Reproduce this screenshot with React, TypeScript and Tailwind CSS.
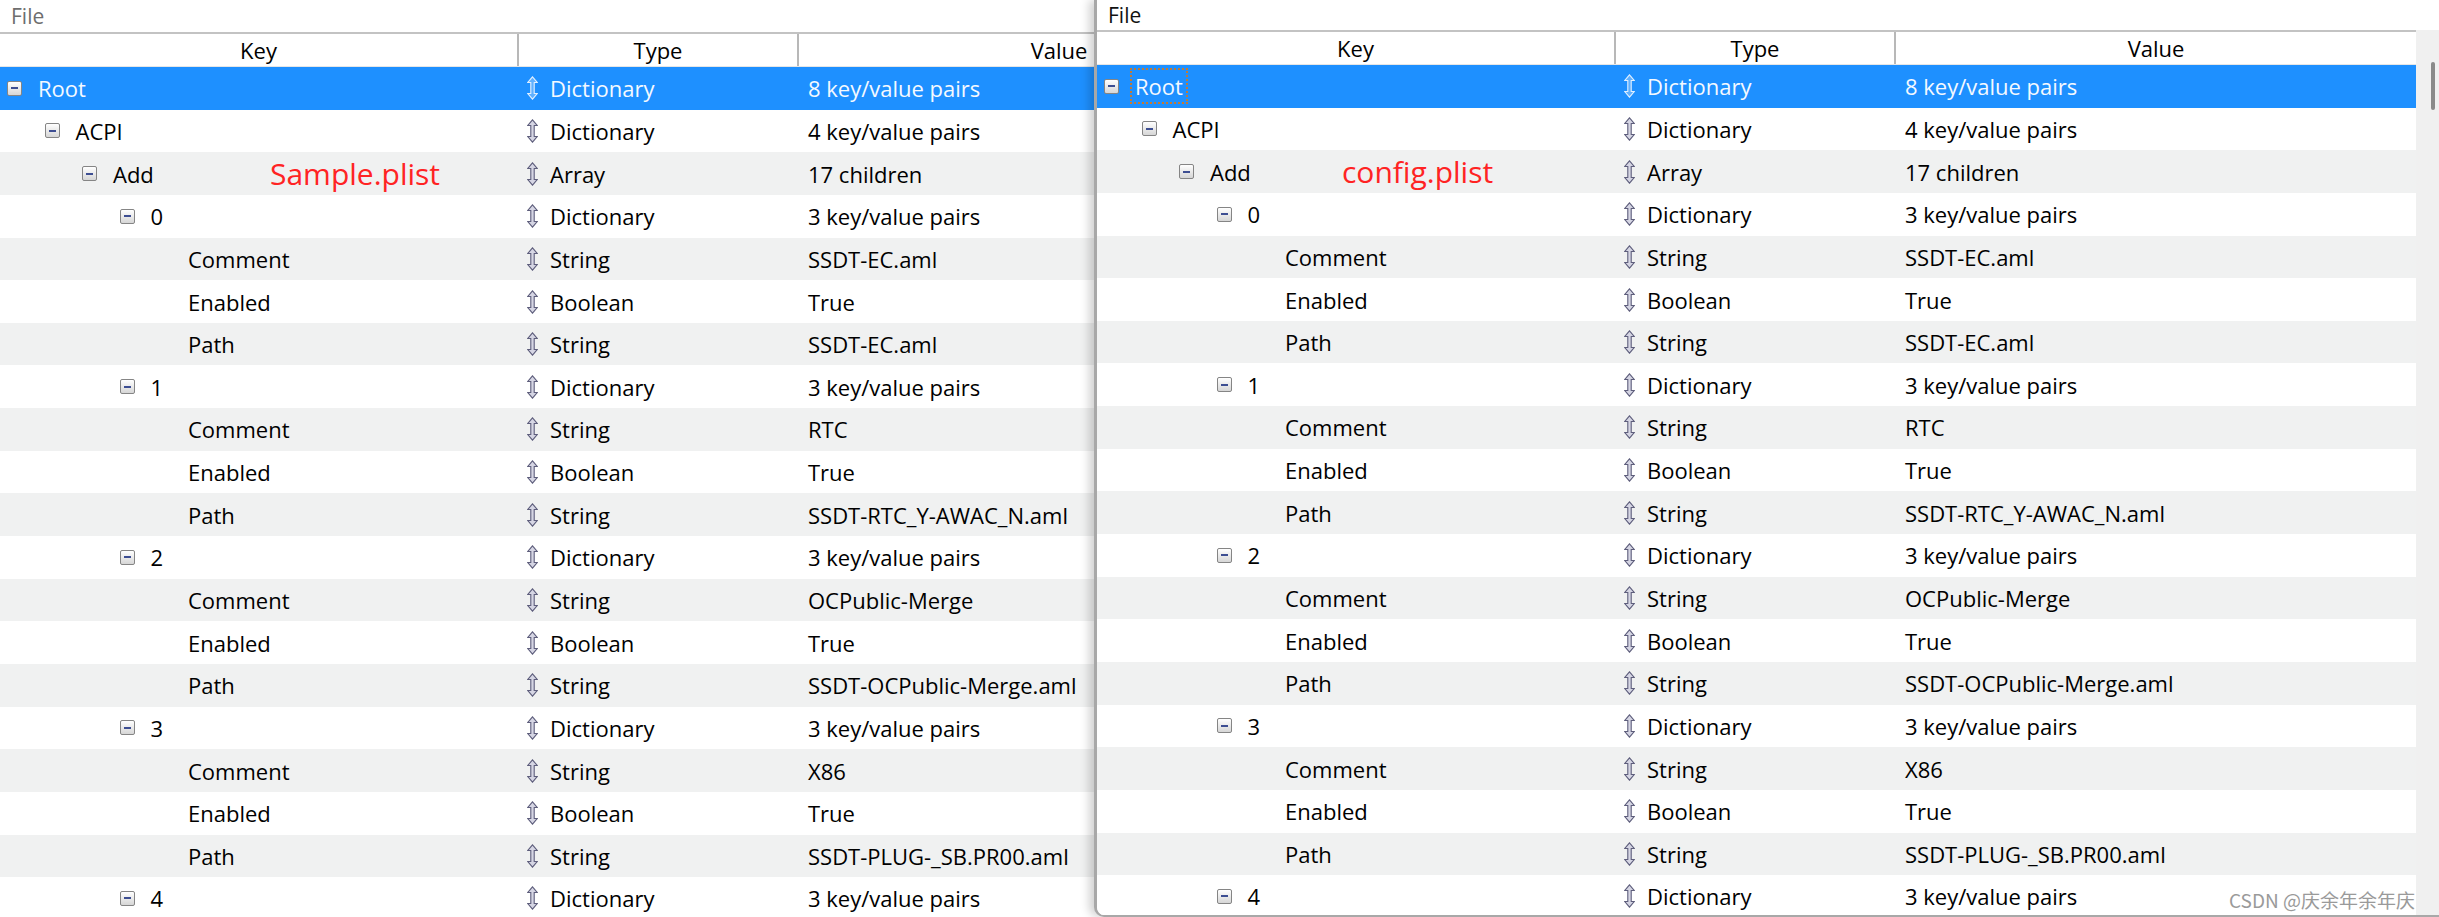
import React from "react";

type Row = { k: string; level: number; box?: boolean; t: string; v: string };

const rows: Row[] = [
  { k: "Root", level: 0, box: true, t: "Dictionary", v: "8 key/value pairs" },
  { k: "ACPI", level: 1, box: true, t: "Dictionary", v: "4 key/value pairs" },
  { k: "Add", level: 2, box: true, t: "Array", v: "17 children" },
  { k: "0", level: 3, box: true, t: "Dictionary", v: "3 key/value pairs" },
  { k: "Comment", level: 4, t: "String", v: "SSDT-EC.aml" },
  { k: "Enabled", level: 4, t: "Boolean", v: "True" },
  { k: "Path", level: 4, t: "String", v: "SSDT-EC.aml" },
  { k: "1", level: 3, box: true, t: "Dictionary", v: "3 key/value pairs" },
  { k: "Comment", level: 4, t: "String", v: "RTC" },
  { k: "Enabled", level: 4, t: "Boolean", v: "True" },
  { k: "Path", level: 4, t: "String", v: "SSDT-RTC_Y-AWAC_N.aml" },
  { k: "2", level: 3, box: true, t: "Dictionary", v: "3 key/value pairs" },
  { k: "Comment", level: 4, t: "String", v: "OCPublic-Merge" },
  { k: "Enabled", level: 4, t: "Boolean", v: "True" },
  { k: "Path", level: 4, t: "String", v: "SSDT-OCPublic-Merge.aml" },
  { k: "3", level: 3, box: true, t: "Dictionary", v: "3 key/value pairs" },
  { k: "Comment", level: 4, t: "String", v: "X86" },
  { k: "Enabled", level: 4, t: "Boolean", v: "True" },
  { k: "Path", level: 4, t: "String", v: "SSDT-PLUG-_SB.PR00.aml" },
  { k: "4", level: 3, box: true, t: "Dictionary", v: "3 key/value pairs" },
];

const indent = ["pl-[7px]", "pl-[44.5px]", "pl-[82px]", "pl-[119.5px]", "pl-[157px]"];

function CollapseBox() {
  return (
    <span className="flex h-[15px] w-[15px] shrink-0 items-center justify-center rounded-[2px] border border-[#858585] bg-linear-to-b from-white to-[#d6d6d6]">
      <span className="h-[2px] w-[7px] bg-[#3d4e92]" />
    </span>
  );
}

function UpDown({ selected }: { selected: boolean }) {
  return (
    <svg width="11" height="24" viewBox="0 0 11 24" className="shrink-0">
      <path
        d="M5.5 0.8 L10.2 6.5 L7.2 6.5 L7.2 17.5 L10.2 17.5 L5.5 23.2 L0.8 17.5 L3.8 17.5 L3.8 6.5 L0.8 6.5 Z"
        fill={selected ? "#5fb0ff" : "#d6d6e4"}
        stroke={selected ? "#e2f0ff" : "#5e5e7c"}
        strokeWidth="1.1"
      />
    </svg>
  );
}

function TableRow({
  row,
  i,
  focus,
  label,
}: {
  row: Row;
  i: number;
  focus: boolean;
  label: string;
}) {
  const selected = i === 0;
  const bg = selected ? "bg-[#1e90ff] text-[#f4f9ff]" : i % 2 === 0 ? "bg-[#f0f1f1] text-black" : "bg-white text-black";
  return (
    <div className={`flex h-[42.65px] shrink-0 items-center ${bg}`}>
      <div className={`relative flex h-full w-[519px] shrink-0 items-center ${indent[row.level]}`}>
        {row.box ? <CollapseBox /> : <span className="w-[15px] shrink-0" />}
        {focus && selected ? (
          <span className="ml-[11px] flex h-[36px] items-center border-2 border-dotted border-[#c27a36] px-[3px]">{row.k}</span>
        ) : (
          <span className="ml-[16px]">{row.k}</span>
        )}
        {row.k === "Add" && (
          <span className={`absolute top-1/2 -translate-y-1/2 text-[30px] text-[#ff2323] ${label === "Sample.plist" ? "left-[270px]" : "left-[245px]"}`}>
            {label}
          </span>
        )}
      </div>
      <div className="flex h-full w-[280px] shrink-0 items-center pl-[8px]">
        <UpDown selected={selected} />
        <span className="ml-[12px]">{row.t}</span>
      </div>
      <div className="flex h-full flex-1 items-center whitespace-nowrap pl-[9px]">{row.v}</div>
    </div>
  );
}

function Header() {
  return (
    <div className="flex h-[35px] shrink-0 border-t-2 border-b border-t-[#c3c3c3] border-b-[#e6e6e6] bg-white text-black">
      <div className="flex w-[519px] shrink-0 items-center justify-center border-r-2 border-[#b8b8b8]">Key</div>
      <div className="flex w-[280px] shrink-0 items-center justify-center border-r-2 border-[#b8b8b8]">Type</div>
      <div className="flex flex-1 items-center justify-center">Value</div>
    </div>
  );
}

function Table({ focus, label }: { focus: boolean; label: string }) {
  return (
    <div className="flex w-[1319px] shrink-0 flex-col overflow-hidden">
      <Header />
      {rows.map((r, i) => (
        <TableRow key={i} row={r} i={i} focus={focus} label={label} />
      ))}
    </div>
  );
}

export default function App() {
  return (
    <div className="relative flex h-[917px] w-[2439px] overflow-hidden bg-white font-['Open_Sans',sans-serif] text-[22px] leading-none">
      {/* left window, partly covered */}
      <div className="flex w-[1094px] shrink-0 flex-col overflow-hidden bg-white">
        <div className="flex h-[32px] shrink-0 items-center pl-[11px] text-[21px] text-[#6e6e6e]">File</div>
        <Table focus={false} label="Sample.plist" />
      </div>

      {/* right window, active */}
      <div className="relative z-10 flex flex-1 flex-col overflow-hidden rounded-bl-[10px] border-b-2 border-l-[3px] border-[#a8a8a8] bg-white shadow-[-5px_0_10px_rgba(0,0,0,0.18)]">
        <div className="flex h-[30px] shrink-0 items-center pl-[11px] text-[21px] text-[#111]">File</div>
        <div className="flex min-h-0 flex-1">
          <Table focus={true} label="config.plist" />
          <div className="flex flex-1 justify-end bg-[#f0f0f0] pr-[4px] pt-[32px]">
            <div className="h-[48px] w-[4px] rounded-full bg-[#8a8a8a]" />
          </div>
        </div>
      </div>

      <div className="absolute bottom-[8px] right-[24px] z-20 font-['Noto_Sans_CJK_SC',sans-serif] text-[19px] text-[#9a9a9a]">
        CSDN @庆余年余年庆
      </div>
    </div>
  );
}
